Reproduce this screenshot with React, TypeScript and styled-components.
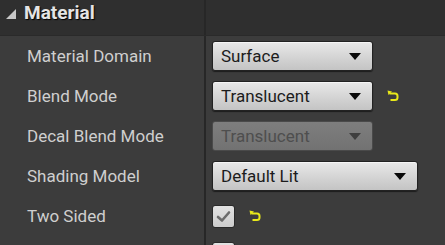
import styled, { createGlobalStyle } from "styled-components";

const GlobalStyle = createGlobalStyle`
  html, body {
    margin: 0;
    padding: 0;
    background: #3c3c3c;
  }
  * {
    box-sizing: border-box;
  }
`;

const Panel = styled.div`
  width: 445px;
  height: 245px;
  overflow: hidden;
  background: #3c3c3c;
  font-family: Roboto, "Liberation Sans", sans-serif;
  display: flex;
  flex-direction: column;
`;

const Header = styled.div`
  height: 36px;
  flex: none;
  display: grid;
  grid-template-columns: 204px 2px 1fr;
  background: #2f2f2f;
  border-bottom: 1px solid #2a2a2a;
`;

const HeaderTitle = styled.div`
  display: flex;
  align-items: flex-start;
  gap: 8px;
  padding: 0 0 0 6px;
  color: #e4e4e4;
  font-size: 19px;
  font-weight: 700;
  text-shadow: 1px 1px 1px #000;
  line-height: 26px;
`;

const Splitter = styled.div`
  background: #272727;
`;

const Row = styled.div`
  height: 40px;
  flex: none;
  display: grid;
  grid-template-columns: 204px 2px 1fr;
`;

const Label = styled.div`
  display: flex;
  align-items: center;
  padding-left: 27px;
  color: #cfcfcf;
  font-size: 17px;
`;

const Value = styled.div<{ $top?: boolean }>`
  display: flex;
  align-items: ${(p) => (p.$top ? "flex-start" : "center")};
  padding-top: ${(p) => (p.$top ? "6px" : "0")};
  gap: 14px;
  padding-left: 6px;
`;

const Combo = styled.div<{ $width: number; $disabled?: boolean }>`
  width: ${(p) => p.$width}px;
  height: 30px;
  display: flex;
  align-items: center;
  justify-content: space-between;
  padding: 0 11px 0 8px;
  border-radius: 3px;
  border: 1px solid ${(p) => (p.$disabled ? "#4a4a4a" : "#222")};
  background: ${(p) =>
    p.$disabled
      ? "linear-gradient(#7e7e7e, #727272)"
      : "linear-gradient(#e9e9e9, #d2d2d2 60%, #c4c4c4)"};
  box-shadow: ${(p) =>
    p.$disabled ? "none" : "inset 0 1px 0 #f6f6f6, 0 1px 1px #1c1c1c"};
  color: ${(p) => (p.$disabled ? "#4e4e4e" : "#1c1c1c")};
  font-size: 17px;
`;

const Arrow = styled.span<{ $disabled?: boolean }>`
  width: 0;
  height: 0;
  border-left: 6.5px solid transparent;
  border-right: 6.5px solid transparent;
  border-top: 7px solid ${(p) => (p.$disabled ? "#3e3e3e" : "#0a0a0a")};
`;

const Check = styled.div`
  width: 23px;
  height: 23px;
  border-radius: 3px;
  background: linear-gradient(#e2e2e2, #cdcdcd);
  border: 1px solid #2a2a2a;
  display: flex;
  align-items: center;
  justify-content: center;
`;

const Triangle = () => (
  <svg width="10" height="10" viewBox="0 0 10 10" style={{ marginTop: 9 }}>
    <polygon points="0,10 10,10 10,0" fill="#c8c8c8" />
  </svg>
);

const ResetIcon = () => (
  <svg width="12" height="12" viewBox="0 0 12 12">
    <polygon points="0.5,0.5 5,1.5 1.5,5" fill="#e8e81a" />
    <path
      d="M2.5 3.5 H8 Q10.5 3.5 10.5 6 V7.5 Q10.5 10 8 10 H3.5"
      fill="none"
      stroke="#e8e81a"
      strokeWidth="2"
    />
  </svg>
);

const CheckMark = () => (
  <svg width="17" height="17" viewBox="0 0 17 17">
    <path
      d="M3 9 L7 12.5 L14 4.5"
      fill="none"
      stroke="#6c6c6c"
      strokeWidth="2.6"
      strokeLinecap="round"
      strokeLinejoin="round"
    />
  </svg>
);

const App = () => {
  return (
    <Panel>
      <GlobalStyle />
      <Header>
        <HeaderTitle>
          <Triangle />
          Material
        </HeaderTitle>
        <Splitter />
        <div />
      </Header>
      <Row>
        <Label>Material Domain</Label>
        <Splitter />
        <Value>
          <Combo $width={161}>
            Surface
            <Arrow />
          </Combo>
        </Value>
      </Row>
      <Row>
        <Label>Blend Mode</Label>
        <Splitter />
        <Value>
          <Combo $width={161}>
            Translucent
            <Arrow />
          </Combo>
          <ResetIcon />
        </Value>
      </Row>
      <Row>
        <Label>Decal Blend Mode</Label>
        <Splitter />
        <Value>
          <Combo $width={161} $disabled>
            Translucent
            <Arrow $disabled />
          </Combo>
        </Value>
      </Row>
      <Row>
        <Label>Shading Model</Label>
        <Splitter />
        <Value>
          <Combo $width={206}>
            Default Lit
            <Arrow />
          </Combo>
        </Value>
      </Row>
      <Row>
        <Label>Two Sided</Label>
        <Splitter />
        <Value>
          <Check>
            <CheckMark />
          </Check>
          <ResetIcon />
        </Value>
      </Row>
      <Row>
        <Label />
        <Splitter />
        <Value $top>
          <Check />
        </Value>
      </Row>
    </Panel>
  );
};

export default App;
